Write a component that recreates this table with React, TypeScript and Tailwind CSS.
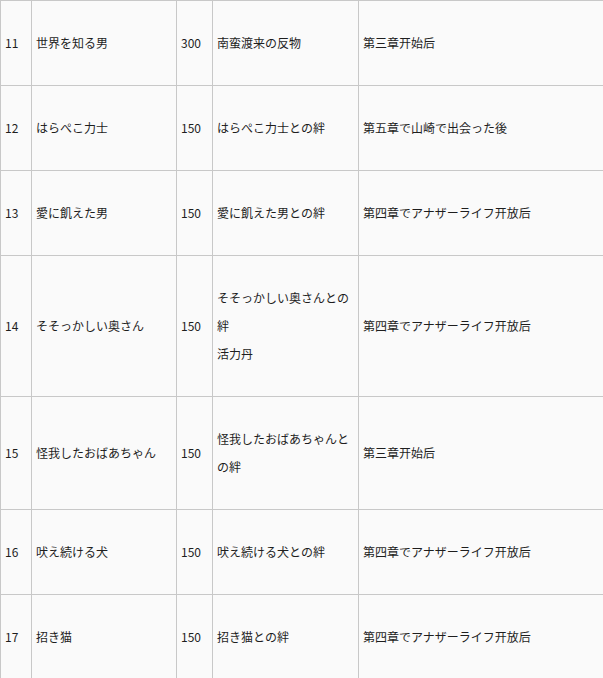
import React from 'react';

interface Row {
    no: string;
    name: string;
    points: string;
    reward: string[];
    condition: string;
}

const rows: Row[] = [
    { no: '11', name: '世界を知る男', points: '300', reward: ['南蛮渡来の反物'], condition: '第三章开始后' },
    { no: '12', name: 'はらぺこ力士', points: '150', reward: ['はらぺこ力士との絆'], condition: '第五章で山崎で出会った後' },
    { no: '13', name: '愛に飢えた男', points: '150', reward: ['愛に飢えた男との絆'], condition: '第四章でアナザーライフ开放后' },
    { no: '14', name: 'そそっかしい奥さん', points: '150', reward: ['そそっかしい奥さんとの絆', '活力丹'], condition: '第四章でアナザーライフ开放后' },
    { no: '15', name: '怪我したおばあちゃん', points: '150', reward: ['怪我したおばあちゃんとの絆'], condition: '第三章开始后' },
    { no: '16', name: '吠え続ける犬', points: '150', reward: ['吠え続ける犬との絆'], condition: '第四章でアナザーライフ开放后' },
    { no: '17', name: '招き猫', points: '150', reward: ['招き猫との絆'], condition: '第四章でアナザーライフ开放后' },
];

const cell = 'flex items-center py-[28px] pl-[4px] pr-[5px] border-b border-[#c8c8c8]';

const App: React.FC = () => {
    return (
        <div
            className="w-full bg-[#fafafa] text-[#1e1e1e] text-[12px] leading-[28px]"
            style={{ fontFamily: '"Noto Sans CJK JP", "Noto Sans", sans-serif' }}
        >
            <div className="grid grid-cols-[31px_145px_36px_146px_1fr] border-l border-t border-[#c8c8c8]">
                {rows.map((r) => (
                    <React.Fragment key={r.no}>
                        <div className={`${cell} border-r`}>{r.no}</div>
                        <div className={`${cell} border-r`}>{r.name}</div>
                        <div className={`${cell} border-r`}>{r.points}</div>
                        <div className={`${cell} border-r`}>
                            <div>
                                {r.reward.map((line) => (
                                    <div key={line}>{line}</div>
                                ))}
                            </div>
                        </div>
                        <div className={cell}>{r.condition}</div>
                    </React.Fragment>
                ))}
            </div>
        </div>
    );
};

export default App;
